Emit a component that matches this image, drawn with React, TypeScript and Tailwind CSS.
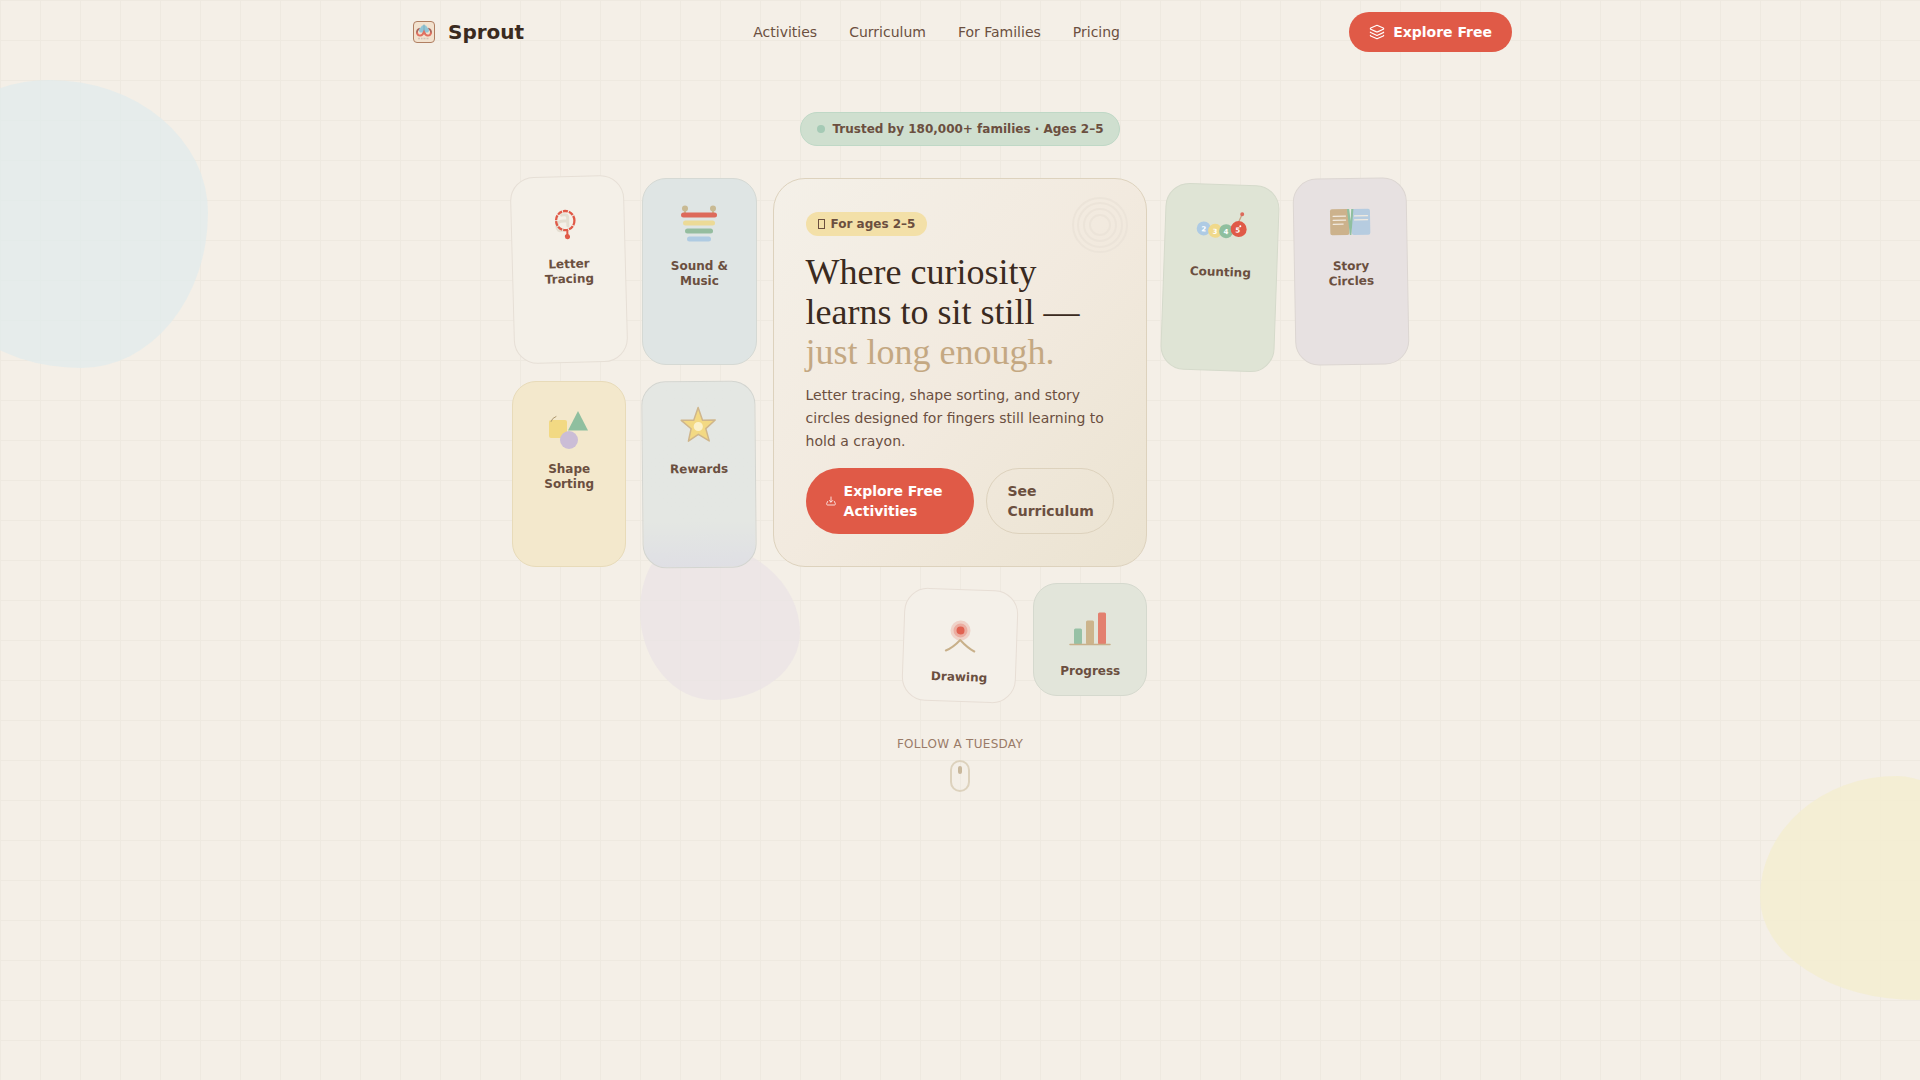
import React from 'react';
import { Layers } from 'lucide-react';

const navLinks = ['Activities', 'Curriculum', 'For Families', 'Pricing'];

const LogoMark = () => (
  <svg viewBox="0 0 32 32" className="size-8" aria-hidden="true">
    <rect x="5.5" y="5.5" width="21" height="21" rx="3.5" fill="#f2e2cf" stroke="#b07f62" />
    <path d="M12 12.500q-3.500 1-3 5M20 12.500q3.500 1 3 5" fill="none" stroke="#a9645a" strokeWidth="1.800" />
    <path d="M12 16.500a3 3 0 0 1 .700-5 3.400 3.400 0 0 1 6.600 0 3 3 0 0 1 .700 5z" fill="#93c5d6" />
    <path d="M16 8.500v7" stroke="#78aebf" strokeWidth="1" />
    <path d="M9 16.500q.500 3.500 3.500 3 2 0 3.500-3.500 1.500 3.500 3.500 3.500 3 .500 3.500-3" fill="none" stroke="#e07060" strokeWidth="2" />
    <path d="M10 22.500h2m1 0h1.500m1 0h2m1 0h2" stroke="#d3c2b6" strokeWidth="1.500" />
  </svg>
);

const TracingIcon = () => (
  <svg viewBox="0 0 56 56" className="size-14" aria-hidden="true">
    <path d="M22 22q7-2 6 5v6M26 28q-9-1-9 5t6 4" fill="none" stroke="#e4ded1" strokeWidth="3" strokeLinecap="round" />
    <ellipse cx="25.5" cy="27.5" rx="9.2" ry="9.6" fill="none" stroke="#e05a48" strokeWidth="2.300" strokeDasharray="5 1" />
    <path d="M27.300 37v6" stroke="#e05a48" strokeWidth="2" />
    <circle cx="27.3" cy="43.500" r="2.600" fill="#e05a48" />
  </svg>
);

const MusicIcon = () => (
  <svg viewBox="0 0 56 56" className="size-14" aria-hidden="true">
    <path d="M14 14v5M42 14v5" stroke="#c9ba93" strokeWidth="2" />
    <circle cx="14" cy="13.500" r="3" fill="#c9ba93" />
    <circle cx="42" cy="13.500" r="3" fill="#c9ba93" />
    <rect x="10" y="17.500" width="36" height="5" rx="2.500" fill="#dd6a5b" />
    <rect x="12" y="25.500" width="32" height="5" rx="2.500" fill="#ecda97" />
    <rect x="14" y="33.500" width="28" height="5" rx="2.500" fill="#95bd9f" />
    <rect x="16" y="41.500" width="24" height="5" rx="2.500" fill="#afcbe2" />
  </svg>
);

const ShapesIcon = () => (
  <svg viewBox="0 0 56 56" className="size-14" aria-hidden="true">
    <rect x="8" y="22" width="18" height="18" rx="2" fill="#f2d983" />
    <path d="M10 23.500q1-3.500 5-5" fill="none" stroke="#ad9870" strokeWidth="1" strokeLinecap="round" />
    <path d="M37 13 47 32.500H27z" fill="#8fbf9f" />
    <circle cx="28" cy="42" r="9" fill="#cbbdd6" />
  </svg>
);

const StarIcon = () => (
  <svg viewBox="0 0 56 56" className="size-14" aria-hidden="true">
    <path
      d="M27.700 9.500 32 22.200h12.700L35.200 30.700 38.500 43 27.700 36.300 17.700 43 20.500 30.700 10.700 22.200h12.500z"
      fill="#f3d983"
      stroke="#cfb68c"
      strokeWidth="1.500"
      strokeLinejoin="round"
    />
    <circle cx="27.7" cy="28.500" r="4.600" fill="#fbf1cb" />
  </svg>
);

const CaterpillarIcon = () => (
  <svg viewBox="0 0 56 56" className="size-14 overflow-visible" aria-hidden="true">
    <path d="M44.500 21 48 12.500" stroke="#c8a184" strokeWidth="1.300" />
    <circle cx="48" cy="12.500" r="2" fill="#dd6a5b" />
    <circle cx="10" cy="28" r="7" fill="#aecbe4" />
    <circle cx="21.5" cy="30" r="7" fill="#f0d98b" />
    <circle cx="32.5" cy="30" r="7" fill="#8fbf9f" />
    <circle cx="45" cy="27.500" r="8" fill="#e05a48" />
    <g fill="#fff" fontSize="7" fontWeight="700" textAnchor="middle">
      <text x="10" y="31">2</text>
      <text x="21.5" y="33">3</text>
      <text x="32.5" y="33">4</text>
      <text x="44" y="31">5</text>
    </g>
    <circle cx="46.5" cy="24.500" r="1" fill="#fff" />
  </svg>
);

const BookIcon = () => (
  <svg viewBox="0 0 56 56" className="size-14" aria-hidden="true">
    <rect x="8" y="14" width="19" height="26" rx="2" fill="#ccb28c" />
    <rect x="29.5" y="14" width="18.500" height="26" rx="2" fill="#b6cce0" />
    <path d="M25 14h6.500l-2.500 26h-1.500z" fill="#8fbf9f" />
    <path d="M27.300 14h2l-.800 12z" fill="#e7eae6" />
    <path d="M11 21h12.500M11 25h12.500M11 29h10M32.500 21h13M32.500 25h13" stroke="#f2ebe0" strokeWidth="1.200" strokeLinecap="round" />
  </svg>
);

const DrawingIcon = () => (
  <svg viewBox="0 0 56 56" className="size-14" aria-hidden="true">
    <circle cx="28" cy="24.500" r="10" fill="#e05a48" opacity=".2" />
    <circle cx="28" cy="24.500" r="7" fill="#e05a48" opacity=".3" />
    <circle cx="28" cy="24.500" r="4" fill="#e05a48" opacity=".9" />
    <path d="M14 45q7-3 14-11 8 8 14.500 11" fill="none" stroke="#c8b08a" strokeWidth="2" strokeLinecap="round" strokeLinejoin="round" />
  </svg>
);

const ProgressIcon = () => (
  <svg viewBox="0 0 56 56" className="size-14" aria-hidden="true">
    <rect x="12" y="28.500" width="8" height="16" rx="1.500" fill="#97c1a5" />
    <rect x="24" y="20.500" width="8" height="24" rx="1.500" fill="#ccb48c" />
    <rect x="36" y="12.500" width="8" height="32" rx="1.500" fill="#e3806f" />
    <path d="M8 44.500h40" stroke="#c8b08a" strokeWidth="1.500" strokeLinecap="round" />
  </svg>
);

const activities = [
  { label: 'Letter Tracing', icon: TracingIcon, style: 'col-start-1 row-start-1 -rotate-[1.5deg] -translate-y-0.5 bg-[#f4f0e8] border-[#e6dfd6]' },
  { label: 'Sound & Music', icon: MusicIcon, style: 'col-start-2 row-start-1 bg-[#dfe5e4] border-[#d5d9d4]' },
  { label: 'Counting', icon: CaterpillarIcon, style: 'col-start-6 row-start-1 rotate-2 translate-y-1.5 bg-[#dfe4d5] border-[#d5dacb]' },
  { label: 'Story Circles', icon: BookIcon, style: 'col-start-7 row-start-1 -rotate-1 bg-[#e7e1e1] border-[#dcd6d2]' },
  { label: 'Shape Sorting', icon: ShapesIcon, style: 'col-start-1 row-start-2 bg-[#f3e8cc] border-[#e8dbb9]' },
  { label: 'Rewards', icon: StarIcon, style: 'col-start-2 row-start-2 -rotate-[0.5deg] bg-linear-to-b from-[#e4e7e3] from-75% to-[#dfdfe4] border-[#d3d5d0]' },
  { label: 'Drawing', icon: DrawingIcon, style: 'col-start-4 row-start-3 rotate-2 translate-y-1.5 bg-[#f4f0e9] border-[#e7ded5]' },
  { label: 'Progress', icon: ProgressIcon, style: 'col-start-5 row-start-3 bg-[#e2e5da] border-[#d5d9ce]' },
];

const Background = () => (
  <div className="absolute inset-0 -z-10 overflow-hidden" aria-hidden="true">
    <div className="absolute inset-0 bg-[linear-gradient(#eee9e0_1px,transparent_1px),linear-gradient(90deg,#eee9e0_1px,transparent_1px)] bg-[size:40px_40px]" />
    <div className="absolute -left-20 top-20 size-72 rounded-[45%_55%_44%_56%/38%_46%_54%_45%] bg-[#dfebec]/70" />
    <div className="absolute -right-16 bottom-20 size-56 rounded-[61%_39%_30%_70%/54%_50%_50%_46%] bg-[#f4edd0]/80" />
    <div className="absolute left-1/3 top-1/2 size-40 rounded-[30%_70%_54%_46%/44%_58%_42%_56%] bg-[#e9e2e6]/70" />
  </div>
);

const Header = () => (
  <header className="mx-auto flex h-16 w-full max-w-6xl items-center justify-between px-6">
    <a href="#" className="flex items-center gap-2 text-xl font-bold text-[#3a2a20]">
      <LogoMark />
      Sprout
    </a>
    <nav className="flex gap-8 text-sm">
      {navLinks.map((link) => (
        <a key={link} href="#">{link}</a>
      ))}
    </nav>
    <button className="flex items-center gap-2 rounded-full bg-[#e05a47] px-5 py-2.5 text-sm font-semibold text-white">
      <Layers className="size-4" strokeWidth={1.7} />
      Explore Free
    </button>
  </header>
);

const HeroCard = () => (
  <div className="relative col-span-3 col-start-3 row-span-2 row-start-1 rounded-4xl border border-[#ddd2bd] bg-linear-to-br from-[#f4f0e8] via-[#f2eadf] to-[#ebe3d1] p-8">
    <svg viewBox="0 0 60 60" className="absolute right-4 top-4 size-[60px]" fill="none" stroke="#ece4d9" strokeWidth="2" aria-hidden="true">
      <circle cx="30" cy="30" r="27" />
      <circle cx="30" cy="30" r="22" />
      <circle cx="30" cy="30" r="16" />
      <circle cx="30" cy="30" r="10" />
    </svg>
    <span className="inline-block rounded-full bg-[#f3e0a8] px-3 py-1 text-xs font-semibold">
      <span className="mr-1.5 inline-block h-2.5 w-[7px] border border-current align-[-1px]" />
      For ages 2–5
    </span>
    <h1 className="mt-4 font-['Liberation_Serif',serif] text-4xl text-[#3a2a20]">
      Where curiosity learns to sit still — <span className="text-[#c4a882]">just long enough.</span>
    </h1>
    <p className="mt-3 text-sm leading-relaxed">
      Letter tracing, shape sorting, and story circles designed for fingers still learning to hold a crayon.
    </p>
    <div className="mt-4 flex gap-3 text-sm font-semibold">
      <button className="flex flex-1 items-center gap-2 rounded-full bg-[#e05a47] px-5 py-3 text-left text-white">
        <svg viewBox="0 0 10 10" className="size-2.5 shrink-0" fill="none" stroke="currentColor" strokeWidth=".8" strokeLinecap="round" strokeLinejoin="round" aria-hidden="true">
          <path d="M5 1v5M3.300 4.500 5 6.200l1.700-1.700M1.600 5.500.700 7.500v.700q0 .800.800.800h7q.800 0 .800-.800v-.700l-.900-2" />
        </svg>
        <span>Explore Free Activities</span>
      </button>
      <button className="w-32 shrink-0 rounded-full border border-[#ddd2bd] px-5 py-3 text-left">
        See Curriculum
      </button>
    </div>
  </div>
);

const App = () => {
  return (
    <div className="relative isolate flex min-h-screen flex-col bg-[#f4efe7] font-['DejaVu_Sans',sans-serif] text-[#6b4f3f]">
      <Background />
      <Header />

      <main className="flex flex-col items-center px-6 pt-12">
        <p className="flex items-center gap-2 rounded-full border border-[#bfd8c6] bg-[#cfdfcf] px-4 py-2 text-xs font-semibold">
          <span className="size-2 rounded-full bg-[#a5cab5]" />
          Trusted by 180,000+ families · Ages 2–5
        </p>

        <section className="mt-8 grid w-full max-w-4xl grid-cols-7 gap-4">
          <HeroCard />
          {activities.map(({ label, icon: Icon, style }) => (
            <div key={label} className={`flex flex-col items-center gap-2 rounded-3xl border p-4 ${style}`}>
              <Icon />
              <h2 className="text-center text-xs leading-tight font-semibold">{label}</h2>
            </div>
          ))}
        </section>

        <div className="mt-10 flex flex-col items-center gap-2">
          <span className="text-xs uppercase tracking-wide text-[#9a7b68]">Follow a Tuesday</span>
          <div className="flex h-8 w-5 justify-center rounded-full border-2 border-[#ddd2bd] pt-1">
            <span className="h-2 w-1 rounded-full bg-[#c9b89c]" />
          </div>
        </div>
      </main>
    </div>
  );
};

export default App;
